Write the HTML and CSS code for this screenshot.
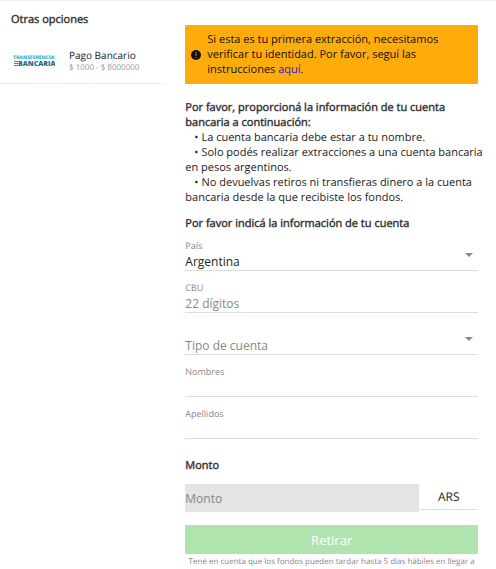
FILE: index.html
```
<!DOCTYPE html>
<html lang="es">
<head>
<meta charset="utf-8">
<meta name="viewport" content="width=device-width, initial-scale=1">
<title>Retirar</title>
<link rel="stylesheet" href="styles.css">
</head>
<body>
<div class="wrap">

	<!-- payment options -->
	<aside class="side">
		<h2 class="title">Otras opciones</h2>
		<a class="option" href="#">
			<svg class="option_logo" viewBox="0 0 42 14" role="img" aria-label="Transferencia Bancaria">
				<text class="logo_top" x="0" y="5">TRANSFERENCIA</text>
				<path d="M1 7h4v1H1zM1 9h4v1H1zM1 11h4v1H1z" fill="#e0405a"/>
				<text class="logo_btm" x="5" y="12">BANCARIA</text>
			</svg>
			<span class="option_txt">
				<span class="option_name">Pago Bancario</span>
				<span class="option_limit">$ 1000 - $ 8000000</span>
			</span>
		</a>
	</aside>

	<!-- withdrawal form -->
	<main class="content">
		<div class="notice">
			<svg class="notice_icon" viewBox="0 0 10 10" aria-hidden="true">
				<circle cx="5" cy="5" r="5" fill="#111"/>
				<path d="M4.6 2h.8v4h-.8zM4.6 7h.8v1h-.8z" fill="#fdac0c"/>
			</svg>
			<p>Si esta es tu primera extracción, necesitamos verificar tu identidad. Por favor, seguí las instrucciones <a href="#">aquí</a>.</p>
		</div>

		<div class="info">
			<h2 class="title">Por favor, proporcioná la información de tu cuenta bancaria a continuación:</h2>
			<ul>
				<li>La cuenta bancaria debe estar a tu nombre.</li>
				<li>Solo podés realizar extracciones a una cuenta bancaria en pesos argentinos.</li>
				<li>No devuelvas retiros ni transfieras dinero a la cuenta bancaria desde la que recibiste los fondos.</li>
			</ul>
		</div>

		<form class="form">
			<h2 class="title">Por favor indicá la información de tu cuenta</h2>
			<div class="field select">
				<label for="country">País</label>
				<select id="country"><option>Argentina</option></select>
				<svg class="arrow" viewBox="0 0 8 4" aria-hidden="true"><path d="M0 0h8L4 4z"/></svg>
			</div>
			<div class="field">
				<label for="cbu">CBU</label>
				<input type="text" id="cbu" placeholder="22 dígitos">
			</div>
			<div class="field select empty">
				<select id="type" aria-label="Tipo de cuenta"><option>Tipo de cuenta</option></select>
				<svg class="arrow" viewBox="0 0 8 4" aria-hidden="true"><path d="M0 0h8L4 4z"/></svg>
			</div>
			<div class="field">
				<label for="names">Nombres</label>
				<input type="text" id="names">
			</div>
			<div class="field">
				<label for="surnames">Apellidos</label>
				<input type="text" id="surnames">
			</div>

			<h2 class="title title_amount"><label for="amount">Monto</label></h2>
			<div class="amount">
				<input type="text" id="amount" placeholder="Monto" disabled>
				<span class="currency">ARS</span>
			</div>
			<button type="submit" class="btn" disabled>Retirar</button>
			<p class="note">Tené en cuenta que los fondos pueden tardar hasta 5 días hábiles en llegar a</p>
		</form>
	</main>
</div>
</body>
</html>
```
FILE: styles.css
```
*{margin:0; padding:0; box-sizing:border-box;}
body{
	background-color:#fff;
	color:#222;
	font-size:11px;
	line-height:15px;
	font-family:"Open Sans", "Noto Sans", sans-serif;
	text-rendering:geometricPrecision;
}
.wrap{
	display:grid;
	grid-template-columns:1fr 2fr;
	border-top:1px solid #eee;
}
/* regular face thickened, the real semibold runs too wide */
.title{font-size:11px; font-weight:400; -webkit-text-stroke:1px rgba(34,34,34,.35);}

/* side */
.side{padding-top:11px;}
.side .title{padding-left:11px;}
.option{
	display:flex;
	align-items:center;
	gap:14px;
	margin-top:16px;
	padding:6px 0 10px 13px;
	border-bottom:1px solid #eee;
	color:#222;
	text-decoration:none;
}
.option_logo{flex:none; width:42px; height:14px;}
.logo_top{fill:#35b5d0; font-size:5px; font-weight:800;}
.logo_btm{fill:#176b8c; font-size:7px; font-weight:800;}
.option_txt{display:flex; flex-direction:column; white-space:nowrap;}
.option_name{font-size:10px; line-height:13px;}
.option_limit{color:#999; font-size:8px; line-height:11px;}

/* content */
.content{padding:24px 18px 0 20px;}
.notice{
	display:flex;
	align-items:center;
	gap:6px;
	padding:7px 36px 7px 6px;
	border-radius:1px;
	background-color:#fdac0c;
	color:#111;
}
.notice_icon{flex:none; width:10px; height:10px;}
.notice a{color:#3a10d0; text-decoration:none;}

.info{margin-top:16px;}
.info ul{margin-right:-8px; list-style:none;}
.info li:before{content:"•"; margin:0 3px 0 9px;}

/* form */
.form{margin-top:14px;}
.form .title{line-height:10px;}
.field{
	position:relative;
	display:flex;
	flex-direction:column;
	justify-content:flex-end;
	height:42px;
	border-bottom:1px solid #ddd;
}
.field label{color:#888; font-size:9px; line-height:12px;}
.field input, .field select{
	width:100%;
	height:18px;
	border:0;
	background:none;
	color:#222;
	font-family:inherit;
	font-size:12px;
	outline:0;
}
.field select{appearance:none;}
.field input::placeholder, .amount input::placeholder{color:#888;}
.field.empty select{color:#888;}
.arrow{
	position:absolute;
	right:5px;
	bottom:13px;
	width:8px;
	height:4px;
	fill:#888;
	pointer-events:none;
}

.title_amount{margin-top:22px;}
.amount{display:flex; align-items:flex-start; margin-top:13px;}
.amount input{
	flex:4;
	min-width:0;
	height:28px;
	border:0;
	background-color:#e4e4e4;
	font-family:inherit;
	font-size:12px;
}
.currency{
	flex:1;
	height:26px;
	border-bottom:1px solid #ddd;
	font-size:12px;
	line-height:26px;
	text-align:center;
}
.btn{
	display:block;
	width:100%;
	height:29px;
	margin-top:13px;
	border:0;
	border-radius:1px;
	background-color:#afe4af;
	color:#fff;
	font-family:inherit;
	font-size:13px;
}
.note{
	padding-top:2px;
	color:#888;
	font-size:8px;
	line-height:12px;
	text-align:center;
}
```
